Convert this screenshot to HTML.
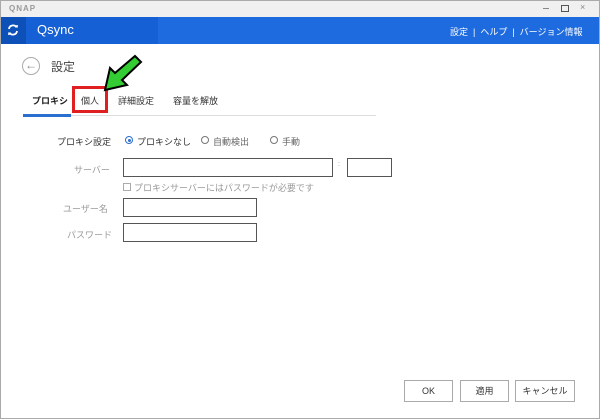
<!DOCTYPE html><html><head><meta charset="utf-8"><style>
body{margin:0;width:600px;height:419px;overflow:hidden;background:#fff;font-family:"Liberation Sans","Noto Sans CJK JP",sans-serif;position:relative}
.a{position:absolute}
.t{font-size:9px;color:#333;white-space:nowrap}
.g{color:#999}
.in{position:absolute;border:1px solid #555;background:#fff;box-sizing:border-box}
.btn{position:absolute;top:380px;height:22px;border:1px solid #aaa;box-sizing:border-box;font-size:9px;text-align:center;line-height:20px;color:#333}
.rad{position:absolute;width:8px;height:8px;border:1px solid #777;border-radius:50%;box-sizing:border-box}
</style></head><body>
<div class="a" style="left:0;top:0;width:600px;height:419px;border:1px solid #aaa;box-sizing:border-box"></div>
<div class="a" style="left:1px;top:1px;width:598px;height:16px;background:#f0f0f0"></div>
<div class="a" style="left:9px;top:4px;font-size:8px;font-weight:bold;color:#999;letter-spacing:1px">QNAP</div>
<div class="a" style="left:543px;top:8px;width:6px;height:1px;background:#888"></div>
<div class="a" style="left:561px;top:5px;width:6px;height:5px;border:1px solid #555"></div>
<div class="a" style="left:580px;top:2px;font-size:9px;color:#888">×</div>
<div class="a" style="left:1px;top:17px;width:598px;height:27px;background:#1e6be0"></div>
<div class="a" style="left:1px;top:17px;width:25px;height:27px;background:#0c50b8"></div>
<div class="a" style="left:26px;top:17px;width:132px;height:27px;background:#1560d4"></div>
<svg class="a" style="left:7px;top:24px" width="12" height="12" viewBox="0 0 12 12"><path d="M2 5A4 4 0 0 1 9.5 3.5M10 7A4 4 0 0 1 2.5 8.5" stroke="#fff" stroke-width="1.8" fill="none"/><path d="M8 1.5L10.5 4 11 1z M4 10.5L1.5 8 1 11z" fill="#fff"/></svg>
<div class="a" style="left:37px;top:22px;font-size:13px;color:#fff">Qsync</div>
<div class="a" style="left:450px;top:25px;font-size:9px;color:#fff;white-space:nowrap">設定 &nbsp;| &nbsp;ヘルプ &nbsp;| &nbsp;バージョン情報</div>
<div class="a" style="left:22px;top:57px;width:18px;height:18px;border:1px solid #aaa;border-radius:50%;box-sizing:border-box;text-align:center;font-size:12px;line-height:15px;color:#888">←</div>
<div class="a" style="left:51px;top:58px;font-size:12px;color:#444">設定</div>
<div class="a t" style="left:32px;top:94px;font-weight:bold;color:#222">プロキシ</div>
<div class="a t" style="left:81px;top:94px">個人</div>
<div class="a t" style="left:118px;top:94px">詳細設定</div>
<div class="a t" style="left:173px;top:94px">容量を解放</div>
<div class="a" style="left:23px;top:115px;width:353px;height:1px;background:#ddd"></div>
<div class="a" style="left:23px;top:114px;width:48px;height:3px;background:#2a6fd0"></div>
<div class="a" style="left:72px;top:86px;width:36px;height:27px;border:3px solid #e02020;box-sizing:border-box"></div>
<svg class="a" style="left:95px;top:52px" width="50" height="42" viewBox="0 0 50 42"><path d="M40 4L46 10 27 28 32 33 10 38 15 16 20 21Z" fill="#33cc33" stroke="#000" stroke-width="2"/></svg>
<div class="a t" style="left:57px;top:135px">プロキシ設定</div>
<div class="rad" style="left:125px;top:136px;border-color:#2a6fd0"></div><div class="a" style="left:127.5px;top:138.5px;width:3px;height:3px;border-radius:50%;background:#2a6fd0"></div>
<div class="a t" style="left:137px;top:135px">プロキシなし</div>
<div class="rad" style="left:201px;top:136px"></div><div class="a t g" style="left:213px;top:135px;color:#666">自動検出</div>
<div class="rad" style="left:270px;top:136px"></div><div class="a t" style="left:282px;top:135px;color:#666">手動</div>
<div class="a t g" style="left:74px;top:163px">サーバー</div>
<div class="in" style="left:123px;top:158px;width:210px;height:19px"></div>
<div class="a t g" style="left:338px;top:161px;font-size:7px">:</div>
<div class="in" style="left:347px;top:158px;width:45px;height:19px"></div>
<div class="a" style="left:123px;top:183px;width:6px;height:6px;border:1px solid #aaa"></div>
<div class="a t g" style="left:134px;top:181px">プロキシサーバーにはパスワードが必要です</div>
<div class="a t g" style="left:63px;top:202px">ユーザー名</div>
<div class="in" style="left:123px;top:198px;width:134px;height:19px"></div>
<div class="a t g" style="left:67px;top:228px">パスワード</div>
<div class="in" style="left:123px;top:223px;width:134px;height:19px"></div>
<div class="btn" style="left:404px;width:49px">OK</div>
<div class="btn" style="left:460px;width:49px">適用</div>
<div class="btn" style="left:515px;width:60px">キャンセル</div>
</body></html>
